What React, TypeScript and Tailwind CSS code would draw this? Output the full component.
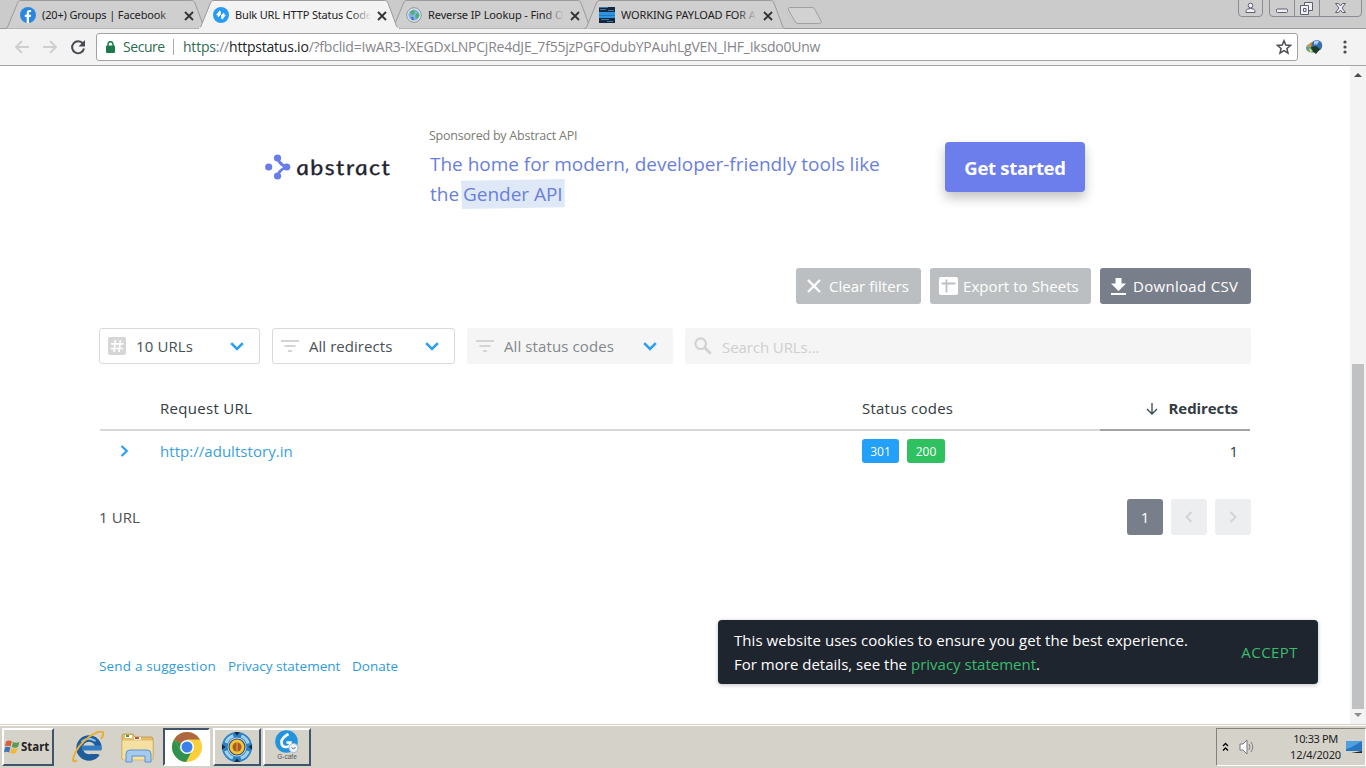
import React from "react";
import clsx from "clsx";

const segoe = "font-['Open_Sans','Noto_Sans',sans-serif]";
const tahoma = "font-['Noto_Sans','Open_Sans',sans-serif]";

/* ---------- Favicons ---------- */

const FacebookIcon = () => (
    <svg width="16" height="16" viewBox="0 0 16 16">
        <circle cx="8" cy="8" r="8" fill="#2a86e0" />
        <path d="M6.7 16V10H4.8V7.7h1.9V6.1c0-2 1.1-3 2.9-3 .8 0 1.5.1 1.5.1v1.9h-.9c-.9 0-1.2.5-1.2 1.1v1.5h2.1L10.7 10H9v6z" fill="#fff" />
    </svg>
);

const HttpStatusIcon = () => (
    <svg width="16" height="16" viewBox="0 0 16 16">
        <circle cx="8" cy="8" r="8" fill="#2a9bf3" />
        <g fill="#fff">
            <path d="M2.800 8.200L6.600 3.400l1.500 1.500-.6 1.300 1.400 1-3.300 3-1.300-1.300.6-1.300z" />
            <path d="M13.200 7.800L9.400 12.600l-1.500-1.500.6-1.300-1-1.200 3-2.800 1.300 1.300-.6 1.300z" />
        </g>
        <path d="M9.800 5.600L6.200 10.400" stroke="#2a9bf3" strokeWidth="1" />
    </svg>
);

const GlobeIcon = () => (
    <svg width="16" height="16" viewBox="0 0 16 16">
        <circle cx="8" cy="8" r="7.300" fill="#e3e7ea" stroke="#8f9498" strokeWidth="1" />
        <circle cx="8" cy="8" r="5.600" fill="#7fb2e2" />
        <path d="M4 5l3-2 2 1-1 3-2 1zM10 7l2.500-1 .8 2.500-1.800 3-2-1z" fill="#4caf6a" />
        <path d="M5 10l2 0 1 3-2 0z" fill="#3c6fc0" />
    </svg>
);

const StripesIcon = () => (
    <svg width="16" height="16" viewBox="0 0 16 16">
        <path fill="#14283d" d="M0 0h16v16H0z" />
        <path fill="#2f94dc" d="M0 5h16v6H0z" />
        <path d="M1 2.500h6M9 3.500h6M2 12.500h8M8 14.500h6M0 .5h9" stroke="#3c78a8" />
        <path d="M0 8.500h16" stroke="#1c78c4" />
    </svg>
);

interface Tab {
    title: string;
    icon: React.ReactNode;
    active?: boolean;
    textClass: string;
}

const tabs: Tab[] = [
    { title: "(20+) Groups | Facebook", icon: <FacebookIcon />, textClass: "tracking-[-0.14px]" },
    { title: "Bulk URL HTTP Status Code", icon: <HttpStatusIcon />, active: true, textClass: "tracking-[-0.16px]" },
    { title: "Reverse IP Lookup - Find O", icon: <GlobeIcon />, textClass: "tracking-[-0.1px]" },
    { title: "WORKING PAYLOAD FOR A", icon: <StripesIcon />, textClass: "tracking-[-0.1px]" },
];

const BrowserTab = ({ title, icon, active, textClass }: Tab) => (
    <div className={clsx("relative flex h-[29px] w-[207px] shrink-0 items-center pl-[15px] -mr-[14px]", active && "z-10")}>
        <svg className="absolute inset-0" width="207" height="29" viewBox="0 0 207 29">
            <path
                d="M0 28.500C2 28.500 2.500 27.500 3 26L12.500 3C13.200 1.300 14 .5 16 .5H186.500C188.500 .5 189.300 1.300 190 3L198.500 26C199.300 27.800 200 28.500 202 28.500"
                fill={active ? "#f3f3f3" : "#cfcfcf"}
                stroke="#9b9b9b"
            />
            {active && <path d="M1 28.500H201" stroke="#f3f3f3" strokeWidth="2" />}
        </svg>
        <span className="relative mt-px">{icon}</span>
        <span className={clsx("relative ml-[6px] w-[136px] overflow-hidden whitespace-nowrap text-[11px] leading-4 text-[#222]", tahoma, textClass)}>
            {title}
            <span className={clsx("absolute inset-y-0 right-0 w-5 bg-linear-to-r from-transparent", active ? "to-[#f3f3f3]" : "to-[#cfcfcf]")} />
        </span>
        <svg className="relative ml-[6px] mt-[2px]" width="10" height="10" viewBox="0 0 10 10">
            <path d="M1 1l8 8M9 1l-8 8" stroke="#333" strokeWidth="1.800" />
        </svg>
    </div>
);

const WindowControls = () => (
    <svg className="absolute right-0 top-0" width="128" height="18" viewBox="0 0 128 18">
        <g fill="#cdcdcd" stroke="#8b8b93">
            <path d="M.5 0v13q0 3.500 3.500 3.500h17q3.500 0 3.500-3.500V0" />
            <path d="M31.500 0v13q0 3.500 3.500 3.500h85q3.500 0 3.500-3.500V0M56.500 0v16M81.500 0v16" />
        </g>
        <g fill="#f2f2f6" stroke="#5c6070">
            <circle cx="12.500" cy="5.500" r="2.300" />
            <path d="M8 12.500v-2q1-2 4.500-2t4.500 2v2z" />
            <rect x="38.500" y="9" width="11" height="3.500" rx="1" />
            <path d="M66.500 2.500h8v8h-8z" />
            <path d="M62.500 5.500h8v9h-8z" />
            <path d="M65.500 8.500h2.500v3h-2.500z" />
            <path d="M97.500 3.500h3l2 2.500 2-2.500h3l-3.500 4.500 3.500 4.500h-3l-2-2.500-2 2.500h-3l3.500-4.500z" />
        </g>
    </svg>
);

const TabStrip = () => (
    <div className="relative flex h-7 bg-[#cbcbcb] pl-[5px]">
        {tabs.map((tab) => (
            <BrowserTab key={tab.title} {...tab} />
        ))}
        <svg className="ml-[10px] mt-[6px]" width="36" height="19" viewBox="0 0 36 19">
            <path d="M2.500 1.500H25q2 0 2.700 1.500l6.300 12q1 2.500-1.500 2.500H11q-2 0-2.700-1.500L1.500 4q-1-2.500 1-2.500z" fill="#d2d2d2" stroke="#a0a0a0" />
        </svg>
        <WindowControls />
    </div>
);

const Toolbar = () => (
    <div className="flex h-[38px] items-center border-b border-[#a5a5a5] bg-[#f3f3f3] shadow-[inset_0_1px_0_#9b9b9b]">
        <svg className="ml-[14px]" width="74" height="18" viewBox="0 0 74 18">
            <g fill="none" stroke="#cfcfcf" strokeWidth="1.800">
                <path d="M15 9H2M8 3L2 9l6 6" />
                <path d="M29 9h13M36 3l6 6-6 6" />
            </g>
            <path d="M69 5.700A6 6 0 1 0 70 10.500" fill="none" stroke="#4a4b52" strokeWidth="2" />
            <path d="M71 2v6.500h-6.500z" fill="#4a4b52" />
        </svg>
        <div className="ml-[8px] flex h-7 w-[1202px] items-center rounded-[3px] border border-[#a3a3a3] bg-white">
            <svg className="ml-[9px]" width="9" height="12" viewBox="0 0 9 12">
                <rect y="4.500" width="9" height="7.500" rx="1" fill="#1c7a4a" />
                <path d="M2 5V3.200a2.500 2.500 0 0 1 5 0V5" fill="none" stroke="#1c7a4a" strokeWidth="1.500" />
            </svg>
            <span className={clsx("ml-[8px] w-[43px] whitespace-nowrap text-[14px] tracking-[-0.45px] text-[#2f6b50]", segoe)}>Secure</span>
            <span className="ml-[7px] h-4 w-px bg-[#aaa]" />
            <span className={clsx("ml-[9px] flex-1 whitespace-nowrap text-[14px] tracking-[-0.22px] text-[#85858a]", segoe)}>
                <span className="text-[#2f6b50]">https</span>://<span className="text-[#222]">httpstatus.io</span>
                /?fbclid=IwAR3-lXEGDxLNPCjRe4dJE_7f55jzPGFOdubYPAuhLgVEN_lHF_Iksdo0Unw
            </span>
            <svg className="mr-[5px]" width="16" height="16" viewBox="0 0 16 16">
                <path d="M8 1.800l1.800 4.300 4.700.4-3.600 3 1.100 4.600L8 11.700l-4 2.400 1.100-4.600-3.600-3 4.700-.4z" fill="none" stroke="#4d4d55" strokeWidth="1.500" />
            </svg>
        </div>
        <svg className="ml-[8px]" width="17" height="16" viewBox="0 0 17 16">
            <ellipse cx="6" cy="9" rx="6" ry="4.500" fill="#5fa08f" />
            <path d="M1 8q3-6 8-5l-1 5z" fill="#d69a3c" />
            <circle cx="10.800" cy="6.500" r="5.500" fill="#3b6fae" />
            <path d="M8 2.500q3-2 5 0l-2 3-3 0z" fill="#a9d0f0" />
            <path d="M5 8l5-1 4 3-4 5-4-3z" fill="#1b3b2c" />
            <path d="M3 9l4 3-3 1z" fill="#e8e36b" />
        </svg>
        <svg className="ml-[20px]" width="4" height="14" viewBox="0 0 4 14" fill="#4a4b52">
            <circle cx="2" cy="2" r="1.600" />
            <circle cx="2" cy="7" r="1.600" />
            <circle cx="2" cy="12" r="1.600" />
        </svg>
    </div>
);

/* ---------- Page ---------- */

const Sponsor = () => (
    <section className="flex h-[84px] pl-[166px]">
        <div className="mt-[28px] flex h-[26px] w-[164px]">
            <svg width="26" height="26" viewBox="0 0 26 26" fill="#6a7ceb">
                <circle cx="3.700" cy="13" r="3.600" />
                <circle cx="12.500" cy="4" r="3.600" />
                <circle cx="12.500" cy="22" r="3.600" />
                <circle cx="21.700" cy="13" r="3.600" />
                <path d="M12.500 4q2 6.500 9 9-7 2.500-9 9" fill="none" stroke="#6a7ceb" strokeWidth="2.800" />
            </svg>
            {/* italic gives the single-storey a, the skew stands it upright again */}
            <span className="ml-[5px] origin-left scale-x-[1.18] skew-x-[8deg] font-['Lato',sans-serif] text-[21px] font-normal italic leading-[26px] tracking-[1.1px] text-[#1f2430] [-webkit-text-stroke:0.3px_#1f2430]">
                abstract
            </span>
        </div>
        <div className="w-[516px]">
            <p className="text-[12.500px] leading-[19px] tracking-[-0.23px] text-[#7b7b74]">Sponsored by Abstract API</p>
            <p className="mt-[4px] pl-px text-[19px] leading-[30px] tracking-[-0.02px] text-[#6a7fdc]">
                <span className="block whitespace-nowrap">The home for modern, developer-friendly tools like</span>
                <span className="block">
                    the <span className="-ml-[3px] inline-block bg-[#dfe8f6] px-[2px] [clip-path:polygon(0_6%,100%_0,100%_94%,1%_100%)]">Gender API</span>
                </span>
            </p>
        </div>
        <button className="mt-[16px] h-[50px] w-[140px] rounded bg-[#6b7eec] pt-[2px] text-[18.500px] font-bold tracking-[-0.3px] text-white shadow-[0_6px_12px_rgba(0,0,0,0.24)]">
            Get started
        </button>
    </section>
);

const Actions = () => (
    <div className="mt-[58px] flex h-9 justify-end gap-[9px] text-[15px] text-white">
        <button className="flex w-[125px] items-center rounded-[3px] bg-[#bcbfc1] pl-[11px]">
            <svg width="14" height="14" viewBox="0 0 14 14">
                <path d="M1 1l12 12M13 1L1 13" stroke="#fff" strokeWidth="2.400" />
            </svg>
            <span className="ml-[8px] whitespace-nowrap tracking-[0.02px]">Clear filters</span>
        </button>
        <button className="flex w-[161px] items-center rounded-[3px] bg-[#bcbfc1] pl-[9px]">
            <svg width="19" height="18" viewBox="0 0 19 18">
                <rect width="19" height="18" rx="2" fill="#fff" />
                <path d="M7.500 2.500v13M2.500 6.500h14" stroke="#bcbfc1" strokeWidth="1.800" />
            </svg>
            <span className="ml-[5px] whitespace-nowrap tracking-[0.06px]">Export to Sheets</span>
        </button>
        <button className="flex w-[151px] items-center rounded-[3px] bg-[#797f8a] pl-[11px]">
            <svg width="15" height="17" viewBox="0 0 15 17" fill="#fff">
                <path d="M4.500 0h6v5.500H15L7.500 13 0 5.500h4.500zM0 15h15v2H0z" />
            </svg>
            <span className="ml-[7px] whitespace-nowrap tracking-[0.3px]">Download CSV</span>
        </button>
    </div>
);

const Chevron = () => (
    <svg width="14" height="9" viewBox="0 0 14 9">
        <path d="M1.200 1.200L7 7l5.800-5.800" fill="none" stroke="#2b9ff0" strokeWidth="2.600" />
    </svg>
);

const FilterLines = () => (
    <svg width="19" height="12" viewBox="0 0 19 12">
        <path d="M0 1h18M3.500 6h11M7 11h4" stroke="#d4d4d4" strokeWidth="2" />
    </svg>
);

const HashIcon = () => (
    <svg width="19" height="18" viewBox="0 0 19 18">
        <rect width="18" height="18" rx="2" fill="#d6d6d6" />
        <path d="M7.500 3L6 15M12.500 3L11 15M3 6.800h12.500M2.500 11.500H15" stroke="#fff" strokeWidth="1.700" />
    </svg>
);

const Filters = () => (
    <div className="mt-6 flex h-9 gap-3 text-[15px] text-[#4a5054]">
        <div className="flex w-[161px] items-center rounded-[3px] border border-[#dadada] pl-2 pr-[15px]">
            <HashIcon />
            <span className="ml-[9px] flex-1 whitespace-nowrap tracking-[0.12px]">10 URLs</span>
            <Chevron />
        </div>
        <div className="flex w-[183px] items-center rounded-[3px] border border-[#dadada] pl-2 pr-[15px]">
            <FilterLines />
            <span className="ml-[9px] flex-1 whitespace-nowrap tracking-[0.05px]">All redirects</span>
            <Chevron />
        </div>
        <div className="flex w-[206px] items-center rounded-[3px] bg-[#f5f5f5] pl-[9px] pr-[16px] text-[#84878a]">
            <FilterLines />
            <span className="ml-[9px] flex-1 whitespace-nowrap tracking-[0.1px]">All status codes</span>
            <Chevron />
        </div>
        <div className="flex flex-1 items-center rounded-[3px] bg-[#f5f5f5] pl-[9px] text-[#cfcfcf]">
            <svg width="18" height="18" viewBox="0 0 18 18">
                <circle cx="6.700" cy="6.700" r="5.300" fill="none" stroke="#d2d2d2" strokeWidth="2.200" />
                <path d="M10.500 10.500L16.700 16.700" stroke="#d2d2d2" strokeWidth="2.800" />
            </svg>
            <span className="ml-[10px] mt-[2px] tracking-[-0.08px]">Search URLs...</span>
        </div>
    </div>
);

const columns = "grid grid-cols-[60px_702px_238px_150px]";

const Results = () => (
    <div className="mx-px mt-[24px] text-[15px] text-[#333b40]">
        <div className={clsx(columns, "h-[43px] font-medium leading-[41px]")}>
            <span className="border-b-2 border-[#d8d8d8]" />
            <span className="border-b-2 border-[#d8d8d8] tracking-[0.3px]">Request URL</span>
            <span className="border-b-2 border-[#d8d8d8] tracking-[0.23px]">Status codes</span>
            <span className="flex items-center justify-end border-b-2 border-[#a3a3a3] pr-3 font-bold tracking-[-0.08px]">
                <svg className="mr-[11px]" width="12" height="12" viewBox="0 0 12 12">
                    <path d="M6 0v11M1 6l5 5 5-5" fill="none" stroke="#2f4a52" strokeWidth="1.300" />
                </svg>
                Redirects
            </span>
        </div>
        <div className={clsx(columns, "h-[40px] items-center")}>
            <svg className="ml-[20px]" width="9" height="12" viewBox="0 0 9 12">
                <path d="M1.500 1L6.800 6 1.500 11" fill="none" stroke="#2b9ff0" strokeWidth="2.200" />
            </svg>
            <a className="tracking-[0.04px] text-[#3a9fe0]">http://adultstory.in</a>
            <span className="flex gap-2 text-[12px] leading-[25px] text-white">
                <span className="h-6 w-[37px] rounded-[3px] bg-[#23a0fa] text-center">301</span>
                <span className="h-6 w-[38px] rounded-[3px] bg-[#2fc060] text-center">200</span>
            </span>
            <span className="pr-3 text-right">1</span>
        </div>
    </div>
);

const Pagination = () => (
    <div className="mt-[28px] flex h-9 items-center gap-2 text-[15px]">
        <span className="mt-px flex-1 tracking-[0.1px] text-[#4a5054]">1 URL</span>
        <button className="size-9 rounded-[3px] bg-[#797f8a] text-white">1</button>
        <button className="flex size-9 items-center justify-center rounded-[3px] bg-[#edeef0]">
            <svg width="8" height="12" viewBox="0 0 8 12">
                <path d="M6.500 1l-5 5 5 5" fill="none" stroke="#d3d4d8" strokeWidth="2" />
            </svg>
        </button>
        <button className="flex size-9 items-center justify-center rounded-[3px] bg-[#edeef0]">
            <svg width="8" height="12" viewBox="0 0 8 12">
                <path d="M1.500 1l5 5-5 5" fill="none" stroke="#d3d4d8" strokeWidth="2" />
            </svg>
        </button>
    </div>
);

const CookieBar = () => (
    <div className="absolute left-[718px] top-[554px] flex h-16 w-[600px] items-center rounded bg-[#1f252f] pl-4 pr-[20px] text-[15px] leading-6 text-white shadow-[0_1px_4px_rgba(0,0,0,0.25)]">
        <p className="flex-1 whitespace-nowrap font-medium">
            <span className="block tracking-[0.06px]">This website uses cookies to ensure you get the best experience.</span>
            <span className="block tracking-[0.01px]">
                For more details, see the <a className="text-[#38bd6c]">privacy statement</a>.
            </span>
        </p>
        <button className="text-[15px] font-medium tracking-[0.45px] text-[#38bd6c]">ACCEPT</button>
    </div>
);

const Scrollbar = () => (
    <div className="flex w-4 flex-col items-center bg-[#f3f3f3]">
        <svg className="mt-[7px] shrink-0" width="8" height="4" viewBox="0 0 8 4">
            <path d="M4 0l4 4H0z" fill="#4c4c4c" />
        </svg>
        <div className="mt-[287px] h-[345px] w-3 bg-[#bfc1c3]" />
        <svg className="mt-[4px]" width="8" height="4" viewBox="0 0 8 4">
            <path d="M0 0h8L4 4z" fill="#8f8f8f" />
        </svg>
    </div>
);

/* ---------- Taskbar ---------- */

const WindowsFlag = () => (
    <svg width="16" height="16" viewBox="0 0 16 16">
        <path d="M2 2.500q3-2 6 0L6.500 7.500q-2.500-1.500-5.500 0z" fill="#d8603a" />
        <path d="M9 3q3 1.500 6.500 0L14 8q-3 1.500-6.300 0z" fill="#5a9b55" />
        <path d="M1 8.500q2.500-1.500 5.500 0L5 13.500q-2.500-1.500-5 0z" fill="#3f73b8" />
        <path d="M7.500 9q3 1.500 6.200 0L12 14q-3 1.500-6 0z" fill="#f0b93a" />
    </svg>
);

const ExplorerIcon = () => (
    <svg width="32" height="32" viewBox="0 0 32 32">
        <circle cx="17" cy="17" r="9.500" fill="none" stroke="#1f5c9c" strokeWidth="6.500" />
        <path d="M18 19h14v4l-3 2-3-2h-8z" fill="#d4d0c8" />
        <path d="M10 14.500h19v5H10z" fill="#2f7cc4" />
        <path d="M9.500 11q6-6 14-1" fill="none" stroke="#8cc5ee" strokeWidth="2" />
        <path d="M5 29Q0 33 1.500 26 5 15 17 6 29-2 31 1.500 32 4 29 8" fill="none" stroke="#e8ae32" strokeWidth="2" />
    </svg>
);

const FolderIcon = () => (
    <svg width="34" height="32" viewBox="0 0 34 32">
        <path d="M1 5q0-2 2-2h9l2 3h16q2 0 2 2v20H1z" fill="#e5bf62" stroke="#b9913f" strokeWidth=".8" />
        <path d="M4 4h7v3H4zM13 6h7v3h-7z" fill="#fff" />
        <path d="M5 4h3v2H5z" fill="#3d9a4d" />
        <path d="M14 6h4v2h-4z" fill="#c8502f" />
        <path d="M1 9h31v18q0 2-2 2H3q-2 0-2-2z" fill="#f5e0a2" stroke="#d8b566" strokeWidth=".8" />
        <path d="M5 31V23q0-4 4-4h17q4 0 4 4v8h-6v-6H11v6z" fill="#a4cbee" stroke="#5b92cc" />
    </svg>
);

const ChromeIcon = () => (
    <svg width="32" height="32" viewBox="0 0 32 32">
        <circle cx="16" cy="16" r="15" fill="#f9cf3a" />
        <path d="M16 16L3 8.500A15 15 0 0 1 29 8.500H16z" fill="#ad6640" />
        <path d="M3 8.500A15 15 0 0 0 15 31l6.500-12H16L9.500 20z" fill="#2f9150" />
        <path d="M3 8.500L9.500 20 16 16z" fill="#2f9150" />
        <circle cx="16" cy="16" r="7" fill="#fff" />
        <circle cx="16" cy="16" r="5.500" fill="#3b80ea" />
    </svg>
);

const WheelIcon = () => (
    <svg width="32" height="32" viewBox="0 0 34 34">
        <circle cx="17" cy="17" r="13" fill="none" stroke="#2b80c2" strokeWidth="6" />
        <circle cx="17" cy="17" r="12.500" fill="none" stroke="#9ed0f2" strokeWidth="3.500" strokeDasharray="11 8.630" strokeDashoffset="-4.300" />
        <path d="M14 1h6l-3 4zM14 33h6l-3-4zM1 14v6l4-3zM33 14v6l-4-3z" fill="#182a44" />
        <circle cx="17" cy="17" r="8.500" fill="#f2c438" stroke="#284f7c" strokeWidth="1.200" />
        <circle cx="17" cy="17" r="4.800" fill="#a75a26" />
        <path d="M17 12.500v9" stroke="#f0a04a" strokeWidth="1.200" />
    </svg>
);

const CafeIcon = () => (
    <svg width="26" height="23" viewBox="0 0 26 23">
        <circle cx="12.500" cy="11.500" r="11.300" fill="#2493dd" />
        <path d="M14.500 4Q7.500 8 7.500 12q0 5 4.500 5t4.500-4.500h-4" fill="none" stroke="#fff" strokeWidth="2.600" />
        <circle cx="19.500" cy="18" r="4.500" fill="#f1f5f9" stroke="#9db4c9" />
        <path d="M17.500 17.500l2 1.500 2-2" fill="none" stroke="#567" />
    </svg>
);

const raised = "border-2 border-l-white border-t-white border-b-[#40556b] border-r-[#40556b]";

const Taskbar = () => (
    <footer className="flex h-11 bg-[#d5d2ca] pl-[2px] pt-1 shadow-[inset_0_1px_0_#d5d2ca,inset_0_2px_0_#fff]">
        <button className={clsx("flex h-[38px] w-[52px] items-center", raised)}>
            <WindowsFlag />
            <span className="ml-px font-['Noto_Sans',sans-serif] text-[11.500px] font-bold text-[#222]">Start</span>
        </button>
        <span className="ml-[18px] mt-[3px] w-8"><ExplorerIcon /></span>
        <span className="ml-[17px] mt-[3px] w-[34px]"><FolderIcon /></span>
        <span className="ml-[8px] flex h-[38px] w-[47px] items-center justify-center border-2 border-b-white border-l-[#40556b] border-r-white border-t-[#40556b] bg-white">
            <ChromeIcon />
        </span>
        <span className={clsx("ml-[3px] flex h-[38px] w-[48px] items-center justify-center", raised)}>
            <WheelIcon />
        </span>
        <span className={clsx("ml-[2px] flex h-[38px] w-[48px] flex-col items-center", raised)}>
            <CafeIcon />
            <span className="font-['Liberation_Sans',sans-serif] text-[6.500px] leading-[8px] text-[#51565f]">G-cafe</span>
        </span>
        <div className="ml-auto flex h-[38px] w-[150px] items-center border border-b-white border-l-[#85837d] border-r-white border-t-[#85837d] pl-[5px]">
            <svg className="shrink-0" width="7" height="10" viewBox="0 0 7 10">
                <path d="M1 4l2.500-2.500L6 4M1 8.500L3.500 6 6 8.500" fill="none" stroke="#000" strokeWidth="1.300" />
            </svg>
            <svg className="ml-[10px] shrink-0" width="17" height="16" viewBox="0 0 17 16">
                <path d="M1 5h3l4-4v14l-4-4H1z" fill="#fff" stroke="#77777c" />
                <path d="M10 5q2 3 0 6M12 3q3.500 5 0 10" fill="none" stroke="#808086" />
            </svg>
            <div className={clsx("ml-[29px] w-[56px] whitespace-nowrap text-right text-[11px] leading-4 text-[#222]", tahoma)}>
                <p className="pr-[3px] tracking-[-0.35px]">10:33 PM</p>
                <p className="tracking-[-0.15px]">12/4/2020</p>
            </div>
            <svg className="ml-[5px] shrink-0" width="16" height="14" viewBox="0 0 16 14">
                <path d="M0 1h16v10H0z" fill="#2776c4" />
                <path d="M0 1h16L4 8 0 9z" fill="#4fa0e2" />
                <path d="M5 13l11-2v2z" fill="#222" />
            </svg>
        </div>
    </footer>
);

const App = () => (
    <div className="flex h-[768px] w-[1366px] flex-col overflow-hidden bg-white">
        <TabStrip />
        <Toolbar />
        <div className={clsx("relative flex h-[658px]", segoe)}>
            <main className="flex-1 px-[99px] pt-[60px]">
                <Sponsor />
                <Actions />
                <Filters />
                <Results />
                <Pagination />
                <nav className="mt-[120px] flex gap-3 text-[13.500px] leading-[22px] text-[#2f9bd8]">
                    <a className="w-[117px] whitespace-nowrap tracking-[0.17px]">Send a suggestion</a>
                    <a className="w-[112px] whitespace-nowrap">Privacy statement</a>
                    <a>Donate</a>
                </nav>
            </main>
            <Scrollbar />
            <CookieBar />
        </div>
        <Taskbar />
    </div>
);

export default App;
